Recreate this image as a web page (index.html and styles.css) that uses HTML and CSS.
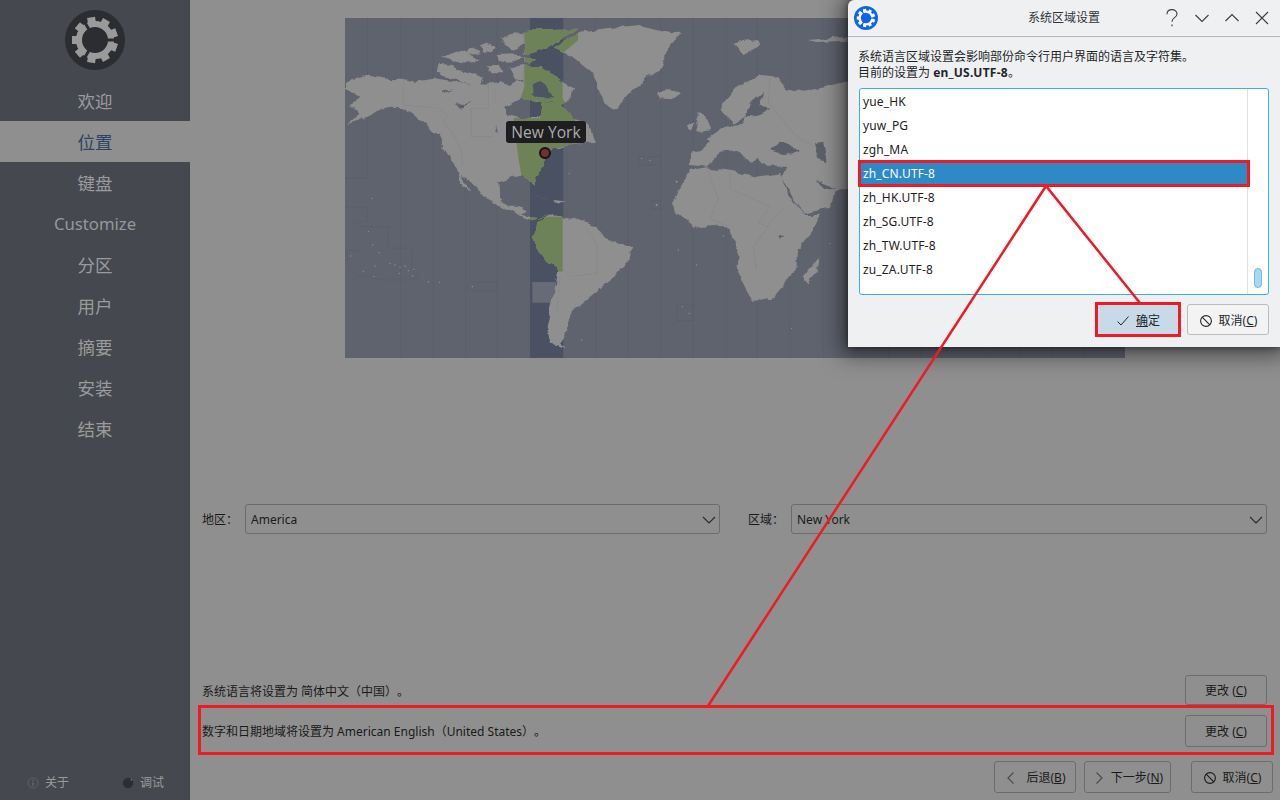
FILE: index.html
```html
<!DOCTYPE html>
<html lang="zh-CN">
<head>
<meta charset="utf-8">
<title>系统区域设置</title>
<link rel="stylesheet" href="styles.css">
</head>
<body>
<svg class="defs" width="0" height="0" aria-hidden="true">
  <defs>
    <symbol id="gear" viewBox="-30 -30 60 60">
      <circle class="gear-ring" r="16" stroke-width="6"/>
      <g class="gear-teeth">
        <rect x="16" y="-4" width="7" height="8" transform="rotate(20)"/>
        <rect x="16" y="-4" width="7" height="8" transform="rotate(60)"/>
        <rect x="16" y="-4" width="7" height="8" transform="rotate(100)"/>
        <rect x="16" y="-4" width="7" height="8" transform="rotate(140)"/>
        <rect x="16" y="-4" width="7" height="8" transform="rotate(180)"/>
        <rect x="16" y="-4" width="7" height="8" transform="rotate(220)"/>
        <rect x="16" y="-4" width="7" height="8" transform="rotate(260)"/>
        <rect x="16" y="-4" width="7" height="8" transform="rotate(300)"/>
        <rect x="16" y="-4" width="7" height="8" transform="rotate(340)"/>
      </g>
      <g class="gear-gaps">
        <rect x="9" y="-1.500" width="16" height="3"/>
        <rect x="9" y="-1.500" width="16" height="3" transform="rotate(120)"/>
        <rect x="9" y="-1.500" width="16" height="3" transform="rotate(240)"/>
      </g>
    </symbol>
    <symbol id="i-forbid" viewBox="0 0 14 14">
      <circle cx="7" cy="7" r="5.400" fill="none" stroke="currentColor" stroke-width="1.100"/>
      <path d="M3.200 3.200l7.600 7.600" fill="none" stroke="currentColor" stroke-width="1.100"/>
    </symbol>
    <symbol id="i-chev" viewBox="0 0 14 8">
      <path d="M1 1l6 6 6-6" fill="none" stroke="currentColor" stroke-width="1.100"/>
    </symbol>
  </defs>
</svg>

<div class="app">
  <aside class="sidebar">
    <div class="logo-wrap"><svg class="logo"><use href="#gear"/></svg></div>
    <nav class="steps">
      <div class="step">欢迎</div>
      <div class="step step-active">位置</div>
      <div class="step">键盘</div>
      <div class="step step-latin">Customize</div>
      <div class="step">分区</div>
      <div class="step">用户</div>
      <div class="step">摘要</div>
      <div class="step">安装</div>
      <div class="step">结束</div>
    </nav>
    <div class="side-foot">
      <span class="foot-item">
        <svg class="foot-icon" viewBox="0 0 12 12"><circle cx="6" cy="6" r="5" fill="none" stroke="#5f6063" stroke-width="1"/><path d="M6 3v1.200M6 5.200V9" stroke="#6d6e70" stroke-width="1.100"/></svg>
        关于
      </span>
      <span class="foot-item">
        <svg class="foot-icon" viewBox="0 0 12 12"><circle cx="6" cy="6" r="5.200" fill="#2d2e31"/><path d="M9 1.600l1.400 1.200L8.600 4z" fill="#77787a"/></svg>
        调试
      </span>
    </div>
  </aside>

  <main class="main">
    <div class="map-row">
      <div class="map">
        <svg class="map-svg" viewBox="15 24 2340 1020" preserveAspectRatio="none">
          <defs>
            <filter id="rough" filterUnits="userSpaceOnUse" x="0" y="0" width="2400" height="1100">
              <feTurbulence type="fractalNoise" baseFrequency="0.028" numOctaves="3" seed="7" result="n"/>
              <feDisplacementMap in="SourceGraphic" in2="n" scale="20" xChannelSelector="R" yChannelSelector="G"/>
              <feGaussianBlur stdDeviation="1.500"/>
            </filter>
            <clipPath id="zone-clip">
              <path d="M553 24H715V90L668 130V265L705 330V400L640 420V540H552L536 450L520 325H600V275L540 270L553 230ZM570 620H668V785H570Z"/>
            </clipPath>
            <g id="land">
              <path d="M20 214L55 205L90 194L130 205L190 210L225 215L285 205L330 212L400 222L440 224L480 214L505 226L530 210L552 215L556 240L545 265L520 275L497 290L500 312L530 322L600 325L605 275L640 275L665 290L690 305L700 330L745 340L765 395L720 400L680 405L640 415L618 445L610 470L585 495L588 530L570 515L553 495L510 505L475 520L478 560L505 590L545 590L560 602L540 612L575 625L605 628L640 615L580 634L545 622L500 596L440 566L410 535L395 515L362 495L395 545L370 525L345 470L310 410L300 380L250 340L225 315L185 292L150 290L120 300L80 320L20 346L60 310L45 295L30 285L60 258L18 240Z"/>
              <path d="M290 190L300 162L345 166L352 180L400 190L435 205L415 228L380 218L345 205L310 198Z"/>
              <path d="M310 140L345 125L375 125L395 115L420 130L385 135L420 146L380 158L340 150Z"/>
              <path d="M420 106L440 100L470 115L450 130L425 125Z"/>
              <path d="M480 85L510 72L553 68L553 100L520 118L495 105Z"/>
              <path d="M440 166L480 165L490 190L455 190Z"/>
              <path d="M470 132L525 130L552 145L510 155L480 150Z"/>
              <path d="M508 172L553 165L553 210L525 205Z"/>
              <path d="M553 62L712 58L660 92L600 122L553 136Z"/>
              <path d="M553 145L592 145L570 160L553 160Z"/>
              <path d="M553 170L600 168L650 200L668 215L705 235L690 265L665 290L640 272L600 275L565 268L543 270L553 230Z"/>
              <path d="M640 115L690 85L720 65L800 55L900 45L960 60L1025 72L990 100L980 130L960 180L920 200L870 250L825 298L790 280L770 220L750 180L700 140Z"/>
              <path d="M950 245L990 240L1020 250L995 268L960 265Z"/>
              <path d="M1180 100L1250 90L1255 110L1210 132Z"/>
              <path d="M1405 90L1520 80V92L1430 96Z"/>
              <path d="M1066 340L1075 310L1095 315L1113 358L1072 364Z"/>
              <path d="M1045 345L1060 338L1058 360L1045 360Z"/>
              <path d="M1145 285L1195 225L1265 195L1310 200L1340 235L1390 245L1530 215V530L1495 540L1470 590L1395 612L1365 580L1340 530L1325 505L1340 470L1290 470L1250 440L1230 462L1190 420L1140 425L1100 470L1050 465L1050 425L1085 420L1110 395L1100 385L1150 350L1200 345L1215 320L1180 340L1150 310Z"/>
              <path d="M1000 570L1050 480L1100 472L1180 484L1240 502L1320 490L1345 560L1395 615L1440 615L1420 660L1370 720L1370 770L1330 830L1300 865L1240 875L1215 835L1190 770L1195 720L1165 660L1120 645L1060 650L1000 600Z"/>
              <path d="M1390 800L1435 745L1430 790L1405 820Z"/>
              <path d="M640 615L700 625L770 650L800 690L880 710L860 760L810 810L750 860L700 900L680 960L660 1000L680 1015L630 1000L620 950L640 860L655 780L590 730L580 680L595 640Z"/>
              <path d="M552 545L610 565L640 575L600 562Z"/>
              <path d="M640 570L680 575L645 578Z"/>
            </g>
            <g id="inland">
              <path d="M575 230L600 212L622 235L640 262L600 262L578 255Z" class="lake-band"/>
              <path d="M1240 270L1270 245L1255 290L1292 296L1240 322L1215 320L1230 290ZM1290 420L1320 395L1380 425L1330 435ZM1422 400L1450 395L1460 460L1435 450ZM1425 510L1460 525L1490 540L1450 535ZM1315 675L1332 678L1320 692ZM305 245L340 238L310 252ZM350 285L395 272L360 290ZM465 345L478 365L470 362Z" class="lake"/>
            </g>
          </defs>
          <rect class="sea" x="15" y="24" width="2340" height="1020"/>
          <rect class="band" x="570" y="24" width="100" height="1020"/>
          <rect class="patch" x="578" y="817" width="70" height="60"/>
          <path class="zones" d="M83 24V505M182 24V1044M280 24V1044M377 24V1044M472 24V1044M767 24V1044M865 24V1044M962 24V1044M1060 24V1044M1158 24V1044M1252 24V1044M1350 24V1044M1450 24V1044M1548 24V1044M1646 24V1044M1744 24V1044M1842 24V1044M1940 24V1044M2038 24V1044M2136 24V1044M2234 24V1044M15 505H83M15 592H83L83 632L45 640L60 650L145 650V715H215V775L235 800L205 810H125L50 795L22 765V722H60M385 816H472V842H385ZM898 440H962V465H898ZM1010 885H1060V932H1010ZM935 572H962V598H935Z"/>
          <use href="#land" class="land" filter="url(#rough)"/>
          <g clip-path="url(#zone-clip)"><use href="#land" class="land-zone" filter="url(#rough)"/></g>
          <path class="land-border" d="M190 210V285L300 295L325 320L310 335L345 380L365 420L367 470M445 225V295H393V380H460M1100 470L1135 570L1110 625L1165 650M1170 490V535L1290 590L1255 640L1285 650L1240 710L1250 780M1330 595L1280 650M660 770L690 800L770 790L770 700L735 650M1290 200L1285 280L1370 380L1440 420M650 905L660 800"/>
          <use href="#inland" filter="url(#rough)"/>
          <g class="isles">
            <circle cx="97" cy="565" r="2"/><circle cx="85" cy="665" r="2"/><circle cx="98" cy="705" r="2"/><circle cx="118" cy="728" r="2"/>
            <circle cx="32" cy="738" r="2"/><circle cx="105" cy="768" r="2"/><circle cx="70" cy="784" r="2"/><circle cx="102" cy="800" r="2"/>
            <circle cx="150" cy="760" r="2"/><circle cx="165" cy="765" r="2"/><circle cx="180" cy="772" r="2"/><circle cx="195" cy="768" r="2"/>
            <circle cx="205" cy="782" r="2"/><circle cx="222" cy="778" r="2"/><circle cx="218" cy="798" r="2"/><circle cx="178" cy="790" r="2"/>
            <circle cx="265" cy="815" r="2"/><circle cx="298" cy="817" r="2"/><circle cx="397" cy="830" r="2"/><circle cx="688" cy="490" r="2"/>
            <circle cx="905" cy="445" r="2"/><circle cx="930" cy="452" r="2"/><circle cx="1015" cy="720" r="2"/><circle cx="1070" cy="765" r="2"/>
            <circle cx="1027" cy="890" r="2"/><circle cx="1047" cy="910" r="2"/><circle cx="950" cy="585" r="3"/><circle cx="1010" cy="515" r="3"/>
            <circle cx="725" cy="990" r="2"/><circle cx="1470" cy="700" r="2"/><circle cx="1355" cy="955" r="2"/><circle cx="1150" cy="678" r="2"/>
          </g>
        </svg>
        <div class="map-label">New York</div>
        <div class="map-pin"></div>
      </div>
    </div>

    <div class="zone-row">
      <label class="field-label field-first">地区：</label>
      <div class="select select-region">America<svg class="chev"><use href="#i-chev"/></svg></div>
      <label class="field-label field-second">区域：</label>
      <div class="select select-zone">New York<svg class="chev"><use href="#i-chev"/></svg></div>
    </div>

    <div class="spacer"></div>

    <div class="locale-row locale-first">
      <span class="locale-text">系统语言将设置为 简体中文（中国）。</span>
      <button class="btn btn-change">更改 (<u>C</u>)</button>
    </div>
    <div class="locale-row locale-second">
      <span class="locale-text">数字和日期地域将设置为 American English（United States）。</span>
      <button class="btn btn-change">更改 (<u>C</u>)</button>
    </div>

    <div class="nav-row">
      <button class="btn btn-back"><svg class="btn-icon" viewBox="0 0 14 14"><path d="M9.500 1.500L4 7l5.500 5.500" fill="none" stroke="currentColor" stroke-width="1.100"/></svg>后退(<u>B</u>)</button>
      <button class="btn btn-next"><svg class="btn-icon" viewBox="0 0 14 14"><path d="M4.500 1.500L10 7l-5.500 5.500" fill="none" stroke="currentColor" stroke-width="1.100"/></svg>下一步(<u>N</u>)</button>
      <button class="btn btn-cancel"><svg class="btn-icon"><use href="#i-forbid"/></svg>取消(<u>C</u>)</button>
    </div>
  </main>
</div>

<section class="dialog">
  <header class="dialog-title">
    <svg class="dialog-logo"><use href="#gear"/></svg>
    <div class="dialog-name">系统区域设置</div>
    <div class="win-buttons">
      <svg class="win-btn" viewBox="0 0 16 20"><path d="M3 6.200C3 3.400 5.200 1.600 8 1.600s5 1.800 5 4.400c0 2-1.300 3-2.700 3.900C9 10.800 8 11.600 8 13.800" fill="none" stroke="currentColor" stroke-width="1.100"/><path d="M8 16.600v1.600" stroke="currentColor" stroke-width="1.200"/></svg>
      <svg class="win-btn" viewBox="0 0 16 20"><path d="M1.500 7l6.500 6.500L14.500 7" fill="none" stroke="currentColor" stroke-width="1.100"/></svg>
      <svg class="win-btn" viewBox="0 0 16 20"><path d="M1.500 13L8 6.500 14.500 13" fill="none" stroke="currentColor" stroke-width="1.100"/></svg>
      <svg class="win-btn" viewBox="0 0 16 20"><path d="M2 4l12 12M14 4L2 16" fill="none" stroke="currentColor" stroke-width="1.100"/></svg>
    </div>
  </header>
  <div class="dialog-body">
    <p class="dialog-text">系统语言区域设置会影响部份命令行用户界面的语言及字符集。<br>目前的设置为 <b>en_US.UTF-8</b>。</p>
    <div class="list">
      <ul class="list-items">
        <li>yue_HK</li>
        <li>yuw_PG</li>
        <li>zgh_MA</li>
        <li class="selected">zh_CN.UTF-8</li>
        <li>zh_HK.UTF-8</li>
        <li>zh_SG.UTF-8</li>
        <li>zh_TW.UTF-8</li>
        <li>zu_ZA.UTF-8</li>
      </ul>
      <div class="scrollbar"><div class="thumb"></div></div>
    </div>
    <div class="dialog-actions">
      <button class="btn dbtn dbtn-ok"><svg class="btn-icon" viewBox="0 0 14 14"><path d="M1.500 7.500L5 11l7.500-8.500" fill="none" stroke="currentColor" stroke-width="1"/></svg><u>确</u>定</button>
      <button class="btn dbtn dbtn-cancel"><svg class="btn-icon"><use href="#i-forbid"/></svg>取消(<u>C</u>)</button>
    </div>
  </div>
</section>

<svg class="annotations" viewBox="0 0 1280 800" aria-hidden="true">
  <rect x="859.500" y="161.500" width="389" height="24"/>
  <rect x="1096.500" y="303.500" width="83" height="32"/>
  <rect x="199.500" y="706.500" width="1073" height="47"/>
  <path d="M708 706L1046 186L1140 303"/>
</svg>
</body>
</html>
```
FILE: styles.css
```css
* { box-sizing: border-box; }
html, body { margin: 0; padding: 0; width: 1280px; height: 800px; overflow: hidden; }
body {
  position: relative;
  background: #8f8f8f;
  color: #1a1a1a;
  font: 12px/16px "Noto Sans", "Noto Sans CJK SC", sans-serif;
  text-spacing-trim: space-all;
}
.defs { position: absolute; }
.app { display: flex; width: 1280px; height: 800px; }

/* sidebar */
.sidebar {
  width: 190px;
  flex: none;
  display: flex;
  flex-direction: column;
  background: #46484f;
  color: #9a9b9c;
}
.logo-wrap { height: 80px; display: flex; justify-content: center; padding-top: 10px; }
.logo {
  width: 60px; height: 60px;
  border-radius: 50%;
  background: #2c2d32;
  color: #9a9a9a;
  --gap: #2c2d32;
}
.gear-ring { fill: none; stroke: currentColor; }
.gear-teeth { fill: currentColor; }
.gear-gaps { fill: var(--gap); }
.steps { flex: 1; }
.step {
  height: 41px;
  display: flex;
  align-items: center;
  justify-content: center;
  font-size: 17.500px;
}
.step-latin { font-size: 16.700px; color: #96979a; }
.step-active { background: #8f8f8f; color: #2a4565; }
.side-foot { height: 33px; display: flex; padding: 6px 0 0 27px; gap: 53px; }
.foot-item { display: flex; align-items: center; gap: 6px; height: 20px; font-size: 12px; }
.foot-icon { width: 12px; height: 12px; flex: none; }

/* main */
.main { flex: 1; min-width: 0; display: flex; flex-direction: column; padding-top: 18px; }
.map-row { display: flex; justify-content: center; }
.map { position: relative; width: 780px; height: 340px; }
.map-svg { display: block; width: 780px; height: 340px; }
.sea { fill: #5f636e; }
.band { fill: #4a5162; }
.patch { fill: #666b75; stroke: #737780; }
.zones { fill: none; stroke: #585c67; stroke-width: 1.500; }
.land { fill: #8f8f8f; }
.land-zone { fill: #6d8257; }
.land-border { fill: none; stroke: #838383; stroke-width: 1.500; }
.lake { fill: #5a5f6a; }
.lake-band { fill: #4e5565; }
.isles { fill: #8f9299; }
.map-label {
  position: absolute;
  left: 161px; top: 103px;
  width: 80px; height: 22px;
  background: #1e1e20;
  border-radius: 3px;
  color: #ababab;
  font: 15.600px/22px "Open Sans", sans-serif;
  text-align: center;
}
.map-pin {
  position: absolute;
  left: 194px; top: 129px;
  width: 12px; height: 12px;
  border-radius: 50%;
  background: #74302f;
  border: 2px solid #131313;
}

.zone-row { display: flex; align-items: center; margin-top: 146px; padding-left: 12px; height: 30px; }
.field-label { white-space: nowrap; padding-top: 2px; }
.field-first { width: 43px; }
.field-second { width: 43px; margin-left: 28px; }
.select {
  height: 30px;
  display: flex;
  align-items: center;
  justify-content: space-between;
  border: 1px solid #6c6c6c;
  border-radius: 3px;
  padding: 2px 2px 0 5px;
}
.select-region { width: 475px; }
.select-zone { width: 476px; }
.chev { width: 14px; height: 8px; margin-right: 1px; color: #2a2a2a; flex: none; }
.spacer { flex: 1; }

.locale-row { display: flex; align-items: center; justify-content: space-between; padding: 0 13px 0 12px; }
.locale-first { height: 30px; }
.locale-first .locale-text { padding-top: 4px; }
.locale-second { height: 32px; margin-top: 10px; }
.locale-second .locale-text { padding-top: 2px; }
.btn {
  display: inline-flex;
  align-items: center;
  justify-content: center;
  margin: 0;
  padding: 2px 0 0;
  background: transparent;
  border: 1px solid #6c6c6c;
  border-radius: 3px;
  color: #1a1a1a;
  font: 12px/16px "Noto Sans", "Noto Sans CJK SC", sans-serif;
}
.btn-change { width: 82px; height: 100%; }
.nav-row { display: flex; padding-right: 7px; margin-top: 14px; margin-bottom: 7px; justify-content: flex-end; height: 32px; }
.btn-back { width: 82px; margin-right: 8px; }
.btn-next { width: 87px; margin-right: 20px; }
.btn-cancel { width: 82px; }
.btn-icon { width: 14px; height: 14px; margin-right: 6px; flex: none; }
.btn-back .btn-icon, .btn-next .btn-icon { color: #4a4a4a; margin-right: 8px; }
.btn-next .btn-icon { margin-right: 5px; }

/* dialog */
.dialog {
  position: absolute;
  left: 848px; top: 0;
  width: 432px; height: 347px;
  background: #eff0f1;
  border-radius: 6px 0 0 0;
  box-shadow: 0 2px 22px 6px rgba(0, 0, 0, .5), 0 0 6px rgba(0, 0, 0, .5);
  color: #232629;
  display: flex;
  flex-direction: column;
}
.dialog-title {
  height: 37px;
  flex: none;
  display: flex;
  align-items: center;
  border-bottom: 1px solid #b5b6b7;
  position: relative;
  padding: 0 10px 0 6px;
}
.dialog-logo {
  width: 24px; height: 24px;
  border-radius: 50%;
  background: #0f64ee;
  color: #fff;
  --gap: #0f64ee;
}
.dialog-name { position: absolute; left: 0; right: 0; text-align: center; color: #31363b; top: 10px; }
.win-buttons { margin-left: auto; display: flex; gap: 14px; position: relative; color: #3a3e42; }
.win-btn { width: 16px; height: 20px; }
.dialog-body { flex: 1; display: flex; flex-direction: column; padding: 12px 11px 11px; }
.dialog-text { margin: 0 0 0 -1px; line-height: 16px; }
.dialog-text b { font-weight: 700; letter-spacing: .25px; }
.list {
  margin-top: 7px;
  height: 207px;
  display: flex;
  background: #fff;
  border: 1px solid #3daee9;
  border-radius: 3px;
  color: #1f2124;
}
.list-items { list-style: none; margin: 0; padding: 0; flex: 1; }
.list-items li { height: 24px; line-height: 26px; padding-left: 3px; letter-spacing: .15px; }
.list-items .selected { background: #2e8ac6; color: #fcfcfc; }
.scrollbar { width: 21px; border-left: 1px solid #e0e0e0; position: relative; }
.thumb {
  position: absolute;
  left: 6px; top: 179px;
  width: 8px; height: 20px;
  border-radius: 4px;
  background: #abd7f1;
  border: 1px solid #6dbcea;
}
.dialog-actions { display: flex; justify-content: flex-end; gap: 8px; margin-top: 9px; }
.dbtn { height: 31px; width: 82px; border-color: #bcbdbe; color: #232629; }
.dbtn-ok { background: #c8dae7; border-color: #c8dae7; }
.dbtn-cancel { background: #f3f3f4; }

/* annotations */
.annotations { position: absolute; left: 0; top: 0; width: 1280px; height: 800px; pointer-events: none; }
.annotations rect { fill: none; stroke: #ed1c24; stroke-width: 3; }
.annotations path { fill: none; stroke: #ed1c24; stroke-width: 2.500; }
```
